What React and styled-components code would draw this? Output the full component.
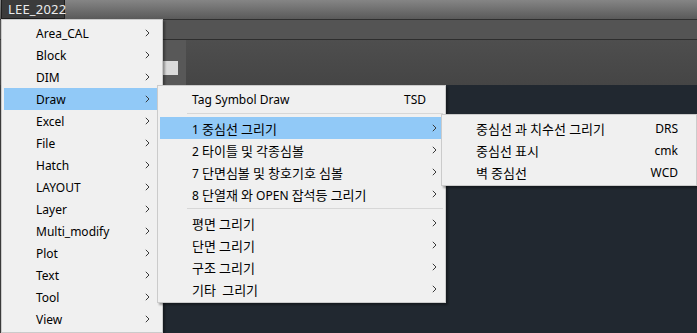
import React from "react";
import styled, { createGlobalStyle } from "styled-components";

const Global = createGlobalStyle`
  html, body { margin: 0; padding: 0; background: #212830; }
  #root { width: 697px; height: 333px; overflow: hidden; }
`;

const Screen = styled.div`
  position: relative;
  width: 697px;
  height: 333px;
  display: flex;
  flex-direction: column;
  font-family: "Noto Sans", "Noto Sans CJK KR", sans-serif;
  overflow: hidden;
`;

const TitleBar = styled.div`
  height: 19px;
  display: flex;
  align-items: stretch;
  padding-left: 1px;
  background: linear-gradient(#858585, #5a5a5a);
  border-bottom: 1px solid #2f2f2f;
`;

const AppButton = styled.div`
  display: flex;
  align-items: center;
  padding: 0 6px;
  width: 50px;
  background: #3b3b3b;
  border: 1px solid #1e1e1e;
  border-top: none;
  color: #ececec;
  font-size: 13px;
  letter-spacing: 0.2px;
`;

const ToolBar = styled.div`
  height: 19px;
  background: #545454;
  border-bottom: 1px solid #2e2e2e;
`;

const Ribbon = styled.div`
  height: 45px;
  display: flex;
  background: linear-gradient(#4e4e4e, #454545);
`;

const RibbonPanel = styled.div`
  margin-left: 162px;
  width: 24px;
  background: #585858;
  display: flex;
  flex-direction: column;
  justify-content: flex-end;
  padding-bottom: 10px;
  box-sizing: border-box;
`;

const RibbonSwatch = styled.div`
  width: 16px;
  height: 14px;
  background: #dadada;
`;

const Canvas = styled.div`
  flex: 1;
  background: #212830;
  border-left: 1px solid #3a3a3a;
`;

const Menu = styled.div`
  position: absolute;
  left: ${(p) => p.$left}px;
  top: ${(p) => p.$top}px;
  width: ${(p) => p.$width}px;
  box-sizing: border-box;
  padding: 2px 2px;
  background: #f0f0f0;
  border: 1px solid #cbcbcb;
  box-shadow: 2px 2px 2px rgba(0, 0, 0, 0.35);
  display: flex;
  flex-direction: column;
`;

const Item = styled.div`
  height: 22px;
  display: grid;
  grid-template-columns: 32px 1fr auto ${(p) => p.$arrowCol}px;
  align-items: center;
  background: ${(p) => (p.$active ? "#91c9f7" : "transparent")};
  color: #000;
  font-size: 12px;
  white-space: pre;
`;

const Label = styled.span`
  grid-column: 2;
  font-family: "Noto Sans", "Noto Sans CJK KR", sans-serif;
`;

const Hangul = styled.span`
  font-family: "Noto Sans CJK KR", sans-serif;
  font-size: 13px;
`;

const Shortcut = styled.span`
  grid-column: 3;
  text-align: right;
`;

const Arrow = styled.span`
  grid-column: 4;
  display: flex;
  justify-content: center;
`;

const Separator = styled.div`
  height: 7px;
  display: flex;
  align-items: center;
  padding-left: 27px;
  &::after {
    content: "";
    flex: 1;
    height: 1px;
    background: #d7d7d7;
  }
`;

const Chevron = () => (
  <svg width="5" height="8" viewBox="0 0 5 8">
    <polyline points="0.8,0.8 4,4 0.8,7.2" fill="none" stroke="#3a3a3a" strokeWidth="1" />
  </svg>
);

const splitHangul = (text) =>
  text.split(/([\uAC00-\uD7A3]+)/).map((part, i) =>
    /[\uAC00-\uD7A3]/.test(part) ? <Hangul key={i}>{part}</Hangul> : part
  );

const MenuItem = ({ label, shortcut, arrow, active, arrowCol }) => (
  <Item $active={active} $arrowCol={arrowCol}>
    <Label>{splitHangul(label)}</Label>
    <Shortcut>{shortcut}</Shortcut>
    <Arrow>{arrow ? <Chevron /> : null}</Arrow>
  </Item>
);

const mainItems = [
  "Area_CAL", "Block", "DIM", "Draw", "Excel", "File", "Hatch",
  "LAYOUT", "Layer", "Multi_modify", "Plot", "Text", "Tool", "View",
];

export default function App() {
  return (
    <>
      <Global />
      <Screen>
        <TitleBar>
          <AppButton>LEE_2022</AppButton>
        </TitleBar>
        <ToolBar />
        <Ribbon>
          <RibbonPanel>
            <RibbonSwatch />
          </RibbonPanel>
        </Ribbon>
        <Canvas />

        <Menu $left={1} $top={19} $width={162}>
          {mainItems.map((m) => (
            <MenuItem key={m} label={m} arrow active={m === "Draw"} arrowCol={26} />
          ))}
        </Menu>

        <Menu $left={157} $top={85} $width={289}>
          <MenuItem label="Tag Symbol Draw" shortcut="TSD" arrowCol={17} />
          <Separator />
          <MenuItem label="1 중심선 그리기" arrow active arrowCol={17} />
          <MenuItem label="2 타이틀 및 각종심볼" arrow arrowCol={17} />
          <MenuItem label="7 단면심볼 및 창호기호 심볼" arrow arrowCol={17} />
          <MenuItem label="8 단열재 와 OPEN 잡석등 그리기" arrow arrowCol={17} />
          <Separator />
          <MenuItem label="평면 그리기" arrow arrowCol={17} />
          <MenuItem label="단면 그리기" arrow arrowCol={17} />
          <MenuItem label="구조 그리기" arrow arrowCol={17} />
          <MenuItem label="기타  그리기" arrow arrowCol={17} />
        </Menu>

        <Menu $left={441} $top={114} $width={256}>
          <MenuItem label="중심선 과 치수선 그리기" shortcut="DRS" arrowCol={16} />
          <MenuItem label="중심선 표시" shortcut="cmk" arrowCol={16} />
          <MenuItem label="벽 중심선" shortcut="WCD" arrowCol={16} />
        </Menu>
      </Screen>
    </>
  );
}
